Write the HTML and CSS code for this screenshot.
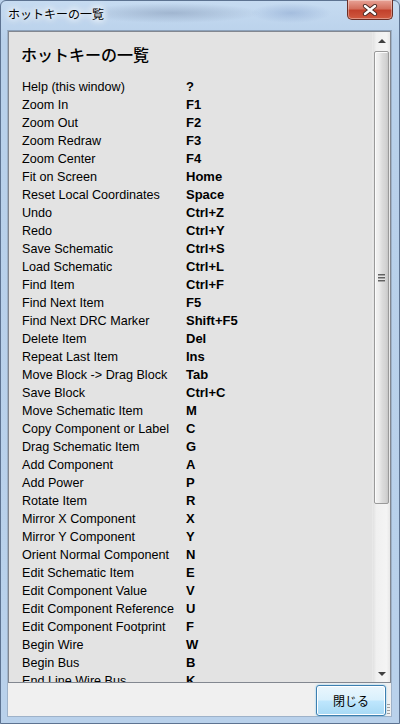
FILE: index.html
```html
<!DOCTYPE html>
<html lang="ja">
<head>
<meta charset="utf-8">
<title>ホットキーの一覧</title>
<link rel="stylesheet" href="styles.css">
</head>
<body>
<div class="window">
  <div class="titlebar">
    <span class="title">ホットキーの一覧</span>
    <div class="close">
      <svg width="16" height="12" viewBox="0 0 16 12">
        <path d="M3 2 L13 10 M13 2 L3 10" stroke="#4a2a24" stroke-width="4.2" stroke-linecap="round"/>
        <path d="M3 2 L13 10 M13 2 L3 10" stroke="#ffffff" stroke-width="2.4" stroke-linecap="round"/>
      </svg>
    </div>
  </div>
  <div class="client">
    <div class="panel">
      <div class="content">
        <h1 class="heading">ホットキーの一覧</h1>
        <table class="keys">
          <tr><td>Help (this window)</td><td>?</td></tr>
          <tr><td>Zoom In</td><td>F1</td></tr>
          <tr><td>Zoom Out</td><td>F2</td></tr>
          <tr><td>Zoom Redraw</td><td>F3</td></tr>
          <tr><td>Zoom Center</td><td>F4</td></tr>
          <tr><td>Fit on Screen</td><td>Home</td></tr>
          <tr><td>Reset Local Coordinates</td><td>Space</td></tr>
          <tr><td>Undo</td><td>Ctrl+Z</td></tr>
          <tr><td>Redo</td><td>Ctrl+Y</td></tr>
          <tr><td>Save Schematic</td><td>Ctrl+S</td></tr>
          <tr><td>Load Schematic</td><td>Ctrl+L</td></tr>
          <tr><td>Find Item</td><td>Ctrl+F</td></tr>
          <tr><td>Find Next Item</td><td>F5</td></tr>
          <tr><td>Find Next DRC Marker</td><td>Shift+F5</td></tr>
          <tr><td>Delete Item</td><td>Del</td></tr>
          <tr><td>Repeat Last Item</td><td>Ins</td></tr>
          <tr><td>Move Block -&gt; Drag Block</td><td>Tab</td></tr>
          <tr><td>Save Block</td><td>Ctrl+C</td></tr>
          <tr><td>Move Schematic Item</td><td>M</td></tr>
          <tr><td>Copy Component or Label</td><td>C</td></tr>
          <tr><td>Drag Schematic Item</td><td>G</td></tr>
          <tr><td>Add Component</td><td>A</td></tr>
          <tr><td>Add Power</td><td>P</td></tr>
          <tr><td>Rotate Item</td><td>R</td></tr>
          <tr><td>Mirror X Component</td><td>X</td></tr>
          <tr><td>Mirror Y Component</td><td>Y</td></tr>
          <tr><td>Orient Normal Component</td><td>N</td></tr>
          <tr><td>Edit Schematic Item</td><td>E</td></tr>
          <tr><td>Edit Component Value</td><td>V</td></tr>
          <tr><td>Edit Component Reference</td><td>U</td></tr>
          <tr><td>Edit Component Footprint</td><td>F</td></tr>
          <tr><td>Begin Wire</td><td>W</td></tr>
          <tr><td>Begin Bus</td><td>B</td></tr>
          <tr><td>End Line Wire Bus</td><td>K</td></tr>
        </table>
      </div>
      <div class="scrollbar">
        <div class="sb-btn"><span class="arrow up"></span></div>
        <div class="sb-track">
          <div class="thumb"><span class="grip"></span></div>
        </div>
        <div class="sb-btn"><span class="arrow down"></span></div>
      </div>
    </div>
    <div class="footer">
      <button class="btn">閉じる</button>
      <span class="resize"></span>
    </div>
  </div>
</div>
</body>
</html>
```

FILE: styles.css
```css
html, body {
  margin: 0;
  padding: 0;
  background: #b9d0ea;
}

.window {
  width: 400px;
  height: 724px;
  box-sizing: border-box;
  display: flex;
  flex-direction: column;
  background:
    radial-gradient(ellipse 90px 10px at 170px 12px, rgba(120,140,170,0.45), transparent),
    radial-gradient(ellipse 40px 10px at 290px 12px, rgba(110,140,190,0.35), transparent),
    linear-gradient(#c6dbf1, #b8d0ea 40px, #b9d1eb);
  border: 1px solid #5d7391;
  border-radius: 6px 6px 0 0;
  padding: 0 7px 7px 6px;
  font-family: "Liberation Sans", Arial, "Noto Sans CJK JP", sans-serif;
}

.titlebar {
  height: 29px;
  display: flex;
  align-items: flex-start;
  flex: none;
}

.title {
  margin-top: 5px;
  margin-left: 1px;
  font-family: "Noto Sans CJK JP", sans-serif;
  font-size: 12px;
  line-height: 16px;
  color: #000;
  text-shadow: 0 0 6px #fff, 0 0 8px #fff, 0 0 10px #fff;
}

.close {
  margin-left: auto;
  margin-top: -1px;
  margin-right: -1px;
  width: 44px;
  height: 19px;
  border: 1px solid #6b2f26;
  border-top: none;
  border-radius: 0 0 5px 5px;
  background: linear-gradient(#e8a397, #d4705e 45%, #c2412c 55%, #d05a40);
  box-shadow: inset 0 0 0 1px rgba(255,255,255,0.35);
  display: flex;
  align-items: center;
  justify-content: center;
}

.client {
  flex: 1;
  display: flex;
  flex-direction: column;
  background: #f0f0f0;
  border: 1px solid #9eb2c9;
  border-top-color: #8da2bb;
}

.panel {
  height: 652px;
  box-sizing: border-box;
  border: 1px solid #828790;
  display: flex;
  background: #e3e3e3;
  overflow: hidden;
  flex: none;
}

.content {
  flex: 1;
  overflow: hidden;
  padding: 12px 0 0 12px;
}

.heading {
  margin: 0 0 14px 0;
  font-family: "Noto Sans CJK JP", sans-serif;
  font-size: 16px;
  line-height: 20px;
  font-weight: 500;
  color: #000;
}

.keys {
  border-collapse: collapse;
}

.keys td {
  padding: 0;
  height: 18px;
  line-height: 18px;
  white-space: nowrap;
  vertical-align: middle;
}

.keys td:first-child {
  width: 164px;
  padding-left: 1px;
  font-size: 12.6px;
  color: #000;
}

.keys td:last-child {
  font-size: 13px;
  font-weight: bold;
  color: #000;
}

.scrollbar {
  width: 17px;
  flex: none;
  display: flex;
  flex-direction: column;
  background: linear-gradient(90deg, #e2e2e2, #f0f0f0 20%, #f4f4f4 80%, #e8e8e8);
  border-left: 1px solid #e8e8e8;
}

.sb-btn {
  height: 17px;
  flex: none;
  display: flex;
  align-items: center;
  justify-content: center;
}

.arrow {
  width: 0;
  height: 0;
  border-left: 4px solid transparent;
  border-right: 4px solid transparent;
}

.arrow.up {
  border-bottom: 4px solid #404040;
}

.arrow.down {
  border-top: 4px solid #404040;
}

.sb-track {
  flex: 1;
  padding: 2px 1px 0 1px;
}

.thumb {
  height: 453px;
  box-sizing: border-box;
  border: 1px solid #9a9a9a;
  border-radius: 2px;
  background: linear-gradient(90deg, #f4f4f4, #ececec 30%, #dcdcdc 55%, #d2d2d2 85%, #c6c6c6);
  box-shadow: inset 1px 1px 0 #fbfbfb;
  display: flex;
  align-items: center;
  justify-content: center;
}

.grip {
  width: 7px;
  height: 8px;
  background: repeating-linear-gradient(#4c4c4c 0 1px, #9a9a9a 1px 2px, #e4e4e4 2px 3px);
  opacity: 0.85;
}

.footer {
  flex: 1;
  display: flex;
  justify-content: flex-end;
  align-items: flex-start;
  padding-top: 2px;
  position: relative;
}

.btn {
  width: 70px;
  height: 31px;
  margin-right: 5px;
  border: 1px solid #3c7fb1;
  border-radius: 3px;
  background: linear-gradient(#eaf6fd, #d9f0fc 48%, #bee6fd 52%, #a7d9f5);
  box-shadow: inset 0 0 0 1px #ffffff, 0 0 2px #72c5f0;
  font-family: "Noto Sans CJK JP", sans-serif;
  font-size: 12px;
  color: #000;
  padding: 0;
}

.resize {
  position: absolute;
  right: 1px;
  bottom: 1px;
  width: 3px;
  height: 11px;
  background: repeating-linear-gradient(#a0a0a0 0 1px, transparent 1px 3px);
}
```
